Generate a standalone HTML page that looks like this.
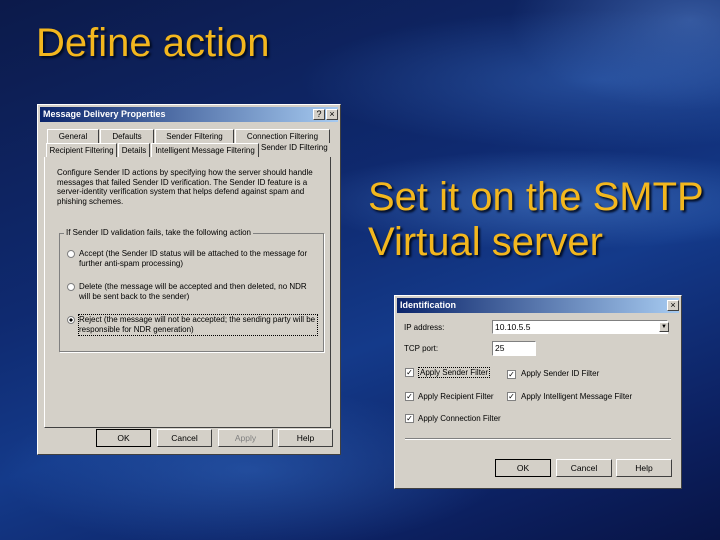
<!DOCTYPE html>
<html><head><meta charset="utf-8"><style>
*{margin:0;padding:0;box-sizing:border-box}
body{width:720px;height:540px;overflow:hidden;position:relative;font-family:"Liberation Sans",sans-serif;
background:
radial-gradient(ellipse 260px 50px at 560px 200px,rgba(90,150,230,.45),transparent),
radial-gradient(ellipse 300px 70px at 600px 80px,rgba(70,130,220,.4),transparent),
radial-gradient(ellipse 250px 80px at 250px 470px,rgba(60,120,210,.4),transparent),
radial-gradient(ellipse 180px 90px at 690px 20px,rgba(110,160,235,.4),transparent),
linear-gradient(160deg,#0c1a4a 0%,#0f2a70 40%,#143a8a 60%,#0c2060 85%,#081446 100%);}
.t{position:absolute;color:#f3b71e;text-shadow:2px 2px 2px #000a1e;font-size:40px;line-height:44px}
.dlg{position:absolute;background:#d4d0c8;border:1px solid #fff;border-right-color:#404040;border-bottom-color:#404040;font-size:8px;color:#000;font-family:"Liberation Sans",sans-serif}
.tb{position:absolute;left:2px;right:2px;top:2px;height:15px;background:linear-gradient(90deg,#0a246a,#a6caf0);color:#fff;font-weight:bold;font-size:9px;line-height:15px;padding-left:3px}
.tbtn{position:absolute;top:2px;width:12px;height:11px;background:#d4d0c8;border:1px solid #fff;border-right-color:#404040;border-bottom-color:#404040;color:#000;font-size:9px;line-height:9px;text-align:center}
.a{position:absolute;white-space:nowrap}
.btn{position:absolute;height:18px;border:1px solid #fff;border-right-color:#404040;border-bottom-color:#404040;text-align:center;line-height:16px;font-size:8.5px}
.tab{position:absolute;height:14px;border:1px solid #fff;border-bottom:none;border-right-color:#404040;text-align:center;line-height:13px;font-size:8px}
.rad{position:absolute;width:8px;height:8px;border-radius:50%;background:#fff;border:1px solid #808080}
.chk{position:absolute;width:9px;height:9px;background:#fff;border:1px solid #808080;font-size:8px;line-height:7px;text-align:center}
.inp{position:absolute;background:#fff;border:1px solid #808080;border-right-color:#fff;border-bottom-color:#fff;font-size:8.5px;padding-left:2px;line-height:13px}
</style></head><body>
<div class="t" style="left:36px;top:21px">Define action</div>
<div class="t" style="left:368px;top:175px;line-height:45px">Set it on the SMTP<br>Virtual server</div>

<div class="dlg" style="left:37px;top:104px;width:304px;height:351px">
 <div class="tb">Message Delivery Properties</div>
 <div class="tbtn" style="left:275px;top:4px">?</div>
 <div class="tbtn" style="left:288px;top:4px">×</div>
 <div class="tab" style="left:9px;top:24px;width:52px">General</div>
 <div class="tab" style="left:62px;top:24px;width:54px">Defaults</div>
 <div class="tab" style="left:117px;top:24px;width:79px">Sender Filtering</div>
 <div class="tab" style="left:197px;top:24px;width:95px">Connection Filtering</div>
 <div class="tab" style="left:8px;top:38px;width:71px">Recipient Filtering</div>
 <div class="tab" style="left:80px;top:38px;width:32px">Details</div>
 <div class="tab" style="left:113px;top:38px;width:108px">Intelligent Message Filtering</div>
 <div class="a" style="left:223px;top:38px">Sender ID Filtering</div>
 <div style="position:absolute;left:6px;top:52px;width:287px;height:271px;border:1px solid #fff;border-right-color:#404040;border-bottom-color:#404040;border-top:none"></div>
 <div class="a" style="left:19px;top:63px;line-height:9.7px">Configure Sender ID actions by specifying how the server should handle<br>messages that failed Sender ID verification. The Sender ID feature is a<br>server-identity verification system that helps defend against spam and<br>phishing schemes.</div>
 <div style="position:absolute;left:21px;top:128px;width:265px;height:119px;border:1px solid #808080;box-shadow:1px 1px 0 #fff"></div>
 <div class="a" style="left:26px;top:123px;background:#d4d0c8;padding:0 2px">If Sender ID validation fails, take the following action</div>
 <div class="rad" style="left:29px;top:145px"></div>
 <div class="a" style="left:41px;top:144px;line-height:10px">Accept (the Sender ID status will be attached to the message for<br>further anti-spam processing)</div>
 <div class="rad" style="left:29px;top:178px"></div>
 <div class="a" style="left:41px;top:177px;line-height:10px">Delete (the message will be accepted and then deleted, no NDR<br>will be sent back to the sender)</div>
 <div class="rad" style="left:29px;top:211px;background:radial-gradient(#000 35%,#fff 40%)"></div>
 <div class="a" style="left:40px;top:209px;line-height:10px;border:1px dotted #000;width:240px">Reject (the message will not be accepted; the sending party will be<br>responsible for NDR generation)</div>
 <div class="btn" style="left:58px;top:324px;width:55px;border:1px solid #000">OK</div>
 <div class="btn" style="left:119px;top:324px;width:55px">Cancel</div>
 <div class="btn" style="left:180px;top:324px;width:55px;color:#808080">Apply</div>
 <div class="btn" style="left:240px;top:324px;width:55px">Help</div>
</div>

<div class="dlg" style="left:394px;top:295px;width:288px;height:194px">
 <div class="tb" style="height:15px">Identification</div>
 <div class="tbtn" style="left:272px;top:4px">×</div>
 <div class="a" style="left:9px;top:27px">IP address:</div>
 <div class="inp" style="left:97px;top:24px;width:176px;height:14px">10.10.5.5</div>
 <div class="tbtn" style="left:264px;top:26px;width:10px;height:10px;font-size:6px;line-height:8px">▼</div>
 <div class="a" style="left:9px;top:48px">TCP port:</div>
 <div class="inp" style="left:97px;top:45px;width:44px;height:15px">25</div>
 <div class="chk" style="left:10px;top:72px">✓</div><div class="a" style="left:23px;top:71px;border:1px dotted #000;padding:0 1px">Apply Sender Filter</div>
 <div class="chk" style="left:112px;top:74px">✓</div><div class="a" style="left:126px;top:73px">Apply Sender ID Filter</div>
 <div class="chk" style="left:10px;top:96px">✓</div><div class="a" style="left:23px;top:96px">Apply Recipient Filter</div>
 <div class="chk" style="left:112px;top:96px">✓</div><div class="a" style="left:126px;top:96px">Apply Intelligent Message Filter</div>
 <div class="chk" style="left:10px;top:118px">✓</div><div class="a" style="left:23px;top:118px">Apply Connection Filter</div>
 <div style="position:absolute;left:10px;top:142px;width:266px;height:2px;border-top:1px solid #808080;border-bottom:1px solid #fff"></div>
 <div class="btn" style="left:100px;top:163px;width:56px;border:1px solid #000">OK</div>
 <div class="btn" style="left:161px;top:163px;width:56px">Cancel</div>
 <div class="btn" style="left:221px;top:163px;width:56px">Help</div>
</div>
</body></html>
